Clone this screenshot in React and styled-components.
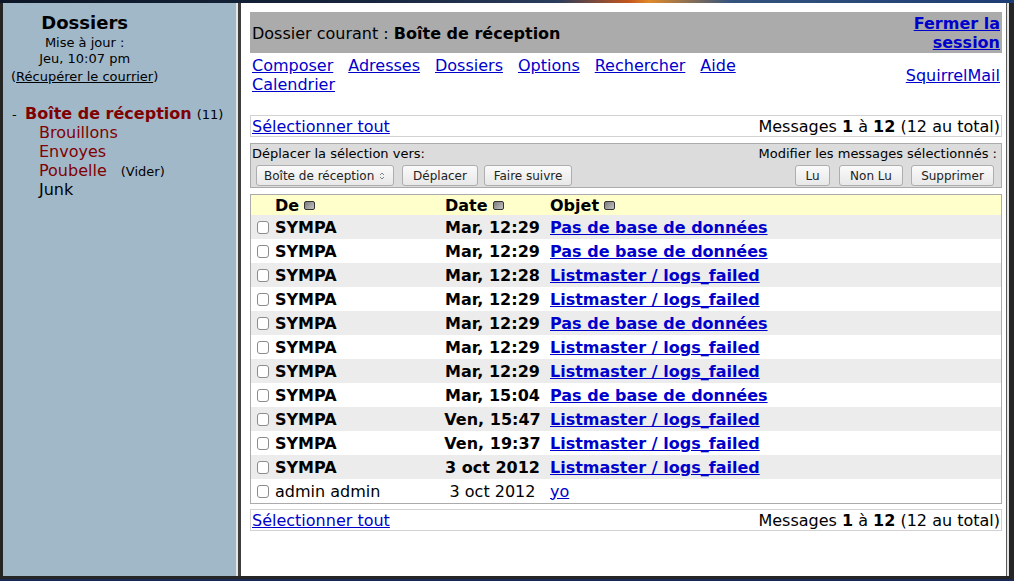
import React from 'react'
import styled, { createGlobalStyle } from 'styled-components'

const GlobalStyle = createGlobalStyle`
  html, body {
    margin: 0;
    padding: 0;
    background: #1e1e1e;
  }
  body {
    font-family: "DejaVu Sans", "Liberation Sans", sans-serif;
    font-size: 16px;
    color: #000;
  }
`

const Screen = styled.div`
  width: 1014px;
  height: 581px;
  box-sizing: border-box;
  padding: 3px 5px 5px 3px;
  display: flex;
  overflow: hidden;
  background:
    linear-gradient(90deg, #0c1626 0%, #16243c 35%, #2a3d5c 55%, #c4561c 62%, #e08a2a 64%, #34547e 72%, #1c3c74 100%) top / 100% 3px no-repeat,
    linear-gradient(0deg, #1a2856 0 2px, #252525 2px);
`

const LeftFrame = styled.div`
  width: 233px;
  flex: none;
  background: #a1b8c9;
  box-sizing: border-box;
  padding: 9px 0 0 8px;
`

const Splitter = styled.div`
  width: 3px;
  flex: none;
  border-left: 2px solid #e6e6e6;
  background: #3e3e3e;
`

const RightFrame = styled.div`
  flex: 1;
  background: #fff;
  box-sizing: border-box;
  padding: 9px 7px 0 9px;
  box-shadow: inset -2px 0 #e4e4e4, inset -3px 0 #5a5a5a;
`

/* left frame */

const LeftHead = styled.div`
  display: inline-flex;
  flex-direction: column;
  align-items: center;
`

const HeadTitle = styled.div`
  font-size: 18px;
  font-weight: bold;
  line-height: 21px;
  margin-bottom: 2px;
`

const HeadSmall = styled.div`
  font-size: 13px;
  line-height: 16px;
  margin-top: ${(p) => p.$gap || 0}px;
`

const PlainLink = styled.a`
  color: #000;
  text-decoration: underline;
`

const FolderList = styled.div`
  margin-top: 19px;
  display: flex;
  flex-direction: column;
`

const FolderRow = styled.div`
  display: flex;
  align-items: baseline;
  height: 19px;
  line-height: 19px;
  padding-left: ${(p) => p.$indent}px;
`

const Dash = styled.span`
  font-size: 13px;
  width: 13px;
  padding-left: 1px;
`

const FolderLink = styled.a`
  color: ${(p) => (p.$plain ? '#000' : '#800000')};
  font-weight: ${(p) => (p.$current ? 'bold' : 'normal')};
  text-decoration: none;
`

const Small = styled.span`
  font-size: 13px;
  margin-left: ${(p) => p.$gap}px;
`

/* right frame */

const TitleBar = styled.div`
  display: flex;
  align-items: center;
  justify-content: space-between;
  background: #ababab;
  padding: 2px 2px 1px 2px;
  line-height: 19px;
`

const Logout = styled.a`
  width: 88px;
  text-align: right;
  font-weight: bold;
  color: #0000cc;
  text-decoration: underline;
`

const NavBar = styled.div`
  display: flex;
  align-items: center;
  justify-content: space-between;
  padding: 3px 2px 0 2px;
  line-height: 19px;
`

const NavLinks = styled.div`
  width: 560px;
  display: flex;
  flex-wrap: wrap;
  column-gap: 15px;
`

const Link = styled.a`
  color: #0000cc;
  text-decoration: underline;
  font-weight: ${(p) => (p.$bold ? 'bold' : 'normal')};
`

const InfoBox = styled.div`
  display: flex;
  justify-content: space-between;
  align-items: center;
  border: 1px solid #d2d2d2;
  height: 20px;
  padding: 0 1px;
  margin-top: ${(p) => p.$top}px;
  line-height: 19px;
`

const ActionBox = styled.div`
  margin-top: 6px;
  background: #dcdcdc;
  border: 1px solid #ababab;
  padding: 2px 7px 1px 1px;
  display: flex;
  justify-content: space-between;
`

const ActionGroup = styled.div`
  display: flex;
  flex-direction: column;
  align-items: ${(p) => (p.$right ? 'flex-end' : 'flex-start')};
  gap: 3px;
`

const ActionLabel = styled.div`
  font-size: 13px;
  line-height: 16px;
  margin-right: ${(p) => (p.$right ? -3 : 0)}px;
`

const Controls = styled.div`
  display: flex;
  padding-left: ${(p) => (p.$right ? 0 : 4)}px;
`

const Button = styled.div`
  width: ${(p) => p.$w}px;
  height: 21px;
  box-sizing: border-box;
  margin-left: ${(p) => p.$gap || 0}px;
  border: 1px solid #aeaeae;
  border-radius: 3px;
  background: linear-gradient(#fafafa, #e8e8e8);
  font-size: 12px;
  display: flex;
  align-items: center;
  justify-content: ${(p) => (p.$select ? 'space-between' : 'center')};
  padding: ${(p) => (p.$select ? '0 8px 0 7px' : '0')};
  color: #222;
`

const MsgTable = styled.div`
  margin-top: 6px;
  border: 1px solid #ababab;
`

const Row = styled.div`
  display: grid;
  grid-template-columns: 21px 170px 101px 1fr;
  align-items: center;
  height: ${(p) => (p.$head ? 20 : 24)}px;
  background: ${(p) => p.$bg};
  font-weight: ${(p) => (p.$bold ? 'bold' : 'normal')};
`

const Cell = styled.div`
  padding: 0 3px;
  white-space: nowrap;
  display: flex;
  align-items: center;
  justify-content: ${(p) => (p.$center ? 'center' : 'flex-start')};
  padding-left: ${(p) => p.$pl ?? 3}px;
`

const Check = styled.span`
  width: 13px;
  height: 13px;
  box-sizing: border-box;
  border: 1px solid #8c8c8c;
  border-radius: 3px;
  background: #fff;
`

const SortIcon = styled.span`
  display: inline-block;
  width: 11px;
  height: 9px;
  box-sizing: border-box;
  margin-left: 5px;
  border: 1px solid #333;
  border-radius: 2px;
  background: linear-gradient(135deg, #7a7a7a, #c4c4c4);
`

const messages = [
  ['Mar, 12:29', 'Pas de base de données'],
  ['Mar, 12:29', 'Pas de base de données'],
  ['Mar, 12:28', 'Listmaster / logs_failed'],
  ['Mar, 12:29', 'Listmaster / logs_failed'],
  ['Mar, 12:29', 'Pas de base de données'],
  ['Mar, 12:29', 'Listmaster / logs_failed'],
  ['Mar, 12:29', 'Listmaster / logs_failed'],
  ['Mar, 15:04', 'Pas de base de données'],
  ['Ven, 15:47', 'Listmaster / logs_failed'],
  ['Ven, 19:37', 'Listmaster / logs_failed'],
  ['3 oct 2012', 'Listmaster / logs_failed'],
]

const Counter = () => (
  <span>
    Messages <b>1</b> à <b>12</b> (12 au total)
  </span>
)

const ArrowsIcon = () => (
  <svg width='6' height='8' viewBox='0 0 6 8'>
    <path d='M1 3 L3 1 L5 3 M1 5 L3 7 L5 5' fill='none' stroke='#777' strokeWidth='0.9' />
  </svg>
)

const App = () => {
  return (
    <>
      <GlobalStyle />
      <Screen>
        <LeftFrame>
          <LeftHead>
            <HeadTitle>Dossiers</HeadTitle>
            <HeadSmall>Mise à jour :</HeadSmall>
            <HeadSmall>Jeu, 10:07 pm</HeadSmall>
            <HeadSmall $gap={2}>
              (<PlainLink>Récupérer le courrier</PlainLink>)
            </HeadSmall>
          </LeftHead>
          <FolderList>
            <FolderRow $indent={0}>
              <Dash>-</Dash>
              <FolderLink $current>Boîte de réception</FolderLink>
              <Small $gap={5}>(11)</Small>
            </FolderRow>
            <FolderRow $indent={28}>
              <FolderLink>Brouillons</FolderLink>
            </FolderRow>
            <FolderRow $indent={28}>
              <FolderLink>Envoyes</FolderLink>
            </FolderRow>
            <FolderRow $indent={28}>
              <FolderLink>Poubelle</FolderLink>
              <Small $gap={14}>(Vider)</Small>
            </FolderRow>
            <FolderRow $indent={28}>
              <FolderLink $plain>Junk</FolderLink>
            </FolderRow>
          </FolderList>
        </LeftFrame>
        <Splitter />
        <RightFrame>
          <TitleBar>
            <span>
              Dossier courant : <b>Boîte de réception</b>
            </span>
            <Logout>Fermer la session</Logout>
          </TitleBar>
          <NavBar>
            <NavLinks>
              {['Composer', 'Adresses', 'Dossiers', 'Options', 'Rechercher', 'Aide', 'Calendrier'].map((n) => (
                <Link key={n}>{n}</Link>
              ))}
            </NavLinks>
            <Link>SquirrelMail</Link>
          </NavBar>

          <InfoBox $top={21}>
            <Link>Sélectionner tout</Link>
            <Counter />
          </InfoBox>

          <ActionBox>
            <ActionGroup>
              <ActionLabel>Déplacer la sélection vers:</ActionLabel>
              <Controls>
                <Button $w={138} $select>
                  <span>Boîte de réception</span>
                  <ArrowsIcon />
                </Button>
                <Button $w={76} $gap={8}>Déplacer</Button>
                <Button $w={88} $gap={6}>Faire suivre</Button>
              </Controls>
            </ActionGroup>
            <ActionGroup $right>
              <ActionLabel $right>Modifier les messages sélectionnés :</ActionLabel>
              <Controls $right>
                <Button $w={35}>Lu</Button>
                <Button $w={64} $gap={9}>Non Lu</Button>
                <Button $w={83} $gap={8}>Supprimer</Button>
              </Controls>
            </ActionGroup>
          </ActionBox>

          <MsgTable>
            <Row $head $bold $bg='#ffffcc'>
              <Cell />
              <Cell>
                De<SortIcon />
              </Cell>
              <Cell>
                Date<SortIcon />
              </Cell>
              <Cell $pl={7}>
                Objet<SortIcon />
              </Cell>
            </Row>
            {messages.map(([date, subject], i) => (
              <Row key={i} $bold $bg={i % 2 === 0 ? '#ececec' : '#ffffff'}>
                <Cell $pl={6}>
                  <Check />
                </Cell>
                <Cell>SYMPA</Cell>
                <Cell $center>{date}</Cell>
                <Cell $pl={7}>
                  <Link $bold>{subject}</Link>
                </Cell>
              </Row>
            ))}
            <Row $bg='#ffffff'>
              <Cell $pl={6}>
                <Check />
              </Cell>
              <Cell>admin admin</Cell>
              <Cell $center>3 oct 2012</Cell>
              <Cell $pl={7}>
                <Link>yo</Link>
              </Cell>
            </Row>
          </MsgTable>

          <InfoBox $top={5}>
            <Link>Sélectionner tout</Link>
            <Counter />
          </InfoBox>
        </RightFrame>
      </Screen>
    </>
  )
}

export default App
